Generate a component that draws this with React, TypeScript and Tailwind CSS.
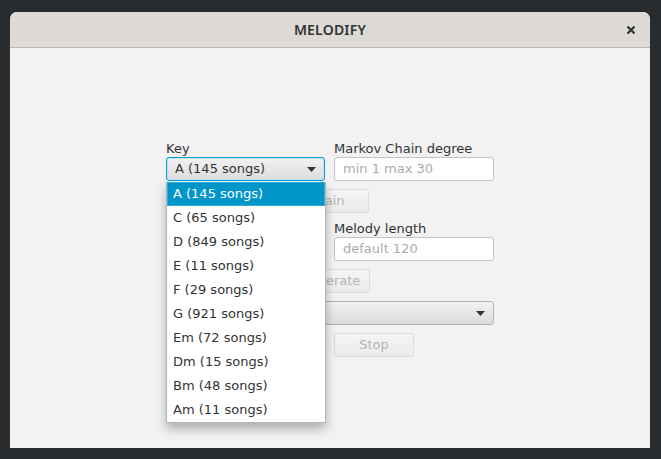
import React from 'react'

const KEYS = [
  'A (145 songs)',
  'C (65 songs)',
  'D (849 songs)',
  'E (11 songs)',
  'F (29 songs)',
  'G (921 songs)',
  'Em (72 songs)',
  'Dm (15 songs)',
  'Bm (48 songs)',
  'Am (11 songs)',
]

const Arrow = () => (
  <svg width="9" height="5" viewBox="0 0 9 5" className="shrink-0">
    <path d="M0 0 L9 0 L4.5 5 Z" fill="#333" />
  </svg>
)

const DisabledButton = ({ label, className }: { label: string; className?: string }) => (
  <div
    className={`h-6 w-20 rounded-[3px] border border-[#dcdcdc] bg-gradient-to-b from-[#f4f4f4] to-[#ececec] flex items-center justify-center text-[#b4b4b4] ${className ?? ''}`}
  >
    {label}
  </div>
)

const TextField = ({ placeholder }: { placeholder: string }) => (
  <div className="h-6 w-[160px] rounded-[3px] border border-[#c4c4c4] bg-white flex items-center px-2 text-[#ababab]">
    {placeholder}
  </div>
)

export default function App() {
  return (
    <div className="h-[459px] w-[661px] bg-[#282c2f] pt-3 px-[10px] text-[13px] text-[#333]" style={{ fontFamily: '"DejaVu Sans", sans-serif' }}>
      <div className="h-[436px] w-[640px] rounded-t-[7px] overflow-hidden bg-[#f2f2f2] flex flex-col">
        {/* title bar */}
        <div className="h-9 shrink-0 bg-[#dedbd7] border-b border-[#bdb7b1] flex items-center relative">
          <div className="flex-1 text-center text-[14px] font-semibold text-[#2e3436] tracking-[0.2px]" style={{ fontFamily: '"Noto Sans", sans-serif' }}>
            MELODIFY
          </div>
          <svg width="10" height="10" viewBox="0 0 10 10" className="absolute right-[14px] top-[13px]">
            <path d="M1.5 1.5 L8.5 8.5 M8.5 1.5 L1.5 8.5" stroke="#2e3436" strokeWidth="2.2" />
          </svg>
        </div>

        {/* content */}
        <div className="pl-[156px] pt-[93px] flex flex-col gap-2">
          <div className="grid grid-cols-[159px_160px] gap-x-[9px]">
            <div className="relative flex flex-col">
              <div className="leading-4 h-4">Key</div>
              <div className="h-6 rounded-[3px] border border-[#039ed3] shadow-[inset_0_0_0_1px_#bfe6f4] bg-gradient-to-b from-[#f2f2f2] to-[#dcdcdc] flex items-center justify-between pl-2 pr-[8px]">
                <span>A (145 songs)</span>
                <Arrow />
              </div>
              {/* dropdown popup */}
              <div className="absolute left-0 top-[41px] z-10 w-[160px] bg-white border border-t-0 border-[#b5b5b5] shadow-[0_6px_10px_rgba(0,0,0,0.28)]">
                {KEYS.map((k, i) => (
                  <div
                    key={k}
                    className={
                      i === 0
                        ? 'h-6 flex items-center pl-[5px] bg-[#0096c9] border border-[#34acd8] text-white'
                        : 'h-6 flex items-center pl-[6px] text-[#333]'
                    }
                  >
                    {k}
                  </div>
                ))}
              </div>
            </div>
            <div className="flex flex-col">
              <div className="leading-4 h-4">Markov Chain degree</div>
              <TextField placeholder="min 1 max 30" />
            </div>
          </div>

          <div className="pl-[123px]">
            <DisabledButton label="Train" />
          </div>

          <div className="grid grid-cols-[159px_160px] gap-x-[9px]">
            <div />
            <div className="flex flex-col">
              <div className="leading-4 h-4">Melody length</div>
              <TextField placeholder="default 120" />
            </div>
          </div>

          <div className="pl-[124px]">
            <DisabledButton label="Generate" />
          </div>

          <div className="w-[328px] h-6 rounded-[3px] border border-[#b3b3b3] bg-gradient-to-b from-[#f2f2f2] to-[#dcdcdc] flex items-center justify-end pr-[8px]">
            <Arrow />
          </div>

          <div className="pl-[168px]">
            <DisabledButton label="Stop" />
          </div>
        </div>
      </div>
    </div>
  )
}
